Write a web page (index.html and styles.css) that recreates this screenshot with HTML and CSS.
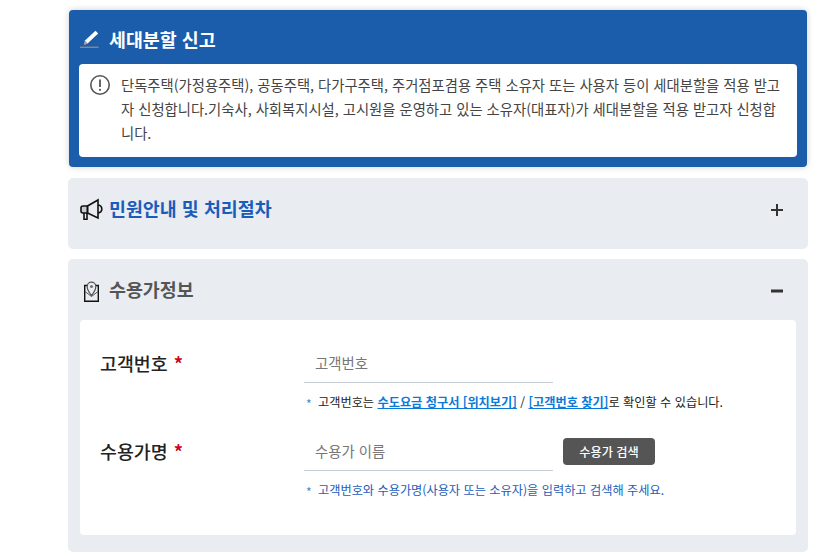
FILE: index.html
```html
<!DOCTYPE html>
<html lang="ko">
<head>
  <meta charset="UTF-8" />
  <meta name="viewport" content="width=device-width, initial-scale=1.0"/>
  <title>세대분할 신고</title>
  <link rel="stylesheet" href="styles.css">
</head>
<body>
  <div class="container">
    <section class="intro">
      <h2 class="intro-title">
        <svg class="icon" width="20" height="20" viewBox="0 0 20 20">
          <path d="M5 11.500L15.500 1.800l2.700 2.700L7.800 14.300l-3.300 1.200z" fill="#fff"/>
          <path d="M3.800 16l1.300-4.300 2.900 2.700z" fill="#a8a59c"/>
          <path d="M0 18.300h18.500" stroke="#8b8780" stroke-width="1.500"/>
        </svg>
        세대분할 신고
      </h2>
      <div class="notice">
        <svg class="notice-icon" width="22" height="22" viewBox="0 0 22 22">
          <circle cx="11" cy="11" r="9.200" fill="none" stroke="#555" stroke-width="1.600"/>
          <path d="M11 5.500v7.500" stroke="#555" stroke-width="1.800"/>
          <circle cx="11" cy="15.800" r="1.100" fill="#555"/>
        </svg>
        <p>단독주택(가정용주택), 공동주택, 다가구주택, 주거점포겸용 주택 소유자 또는 사용자 등이 세대분할을 적용 받고자 신청합니다.기숙사, 사회복지시설, 고시원을 운영하고 있는 소유자(대표자)가 세대분할을 적용 받고자 신청합니다.</p>
      </div>
    </section>

    <section class="panel panel-closed">
      <div class="panel-head">
        <h3 class="panel-title title-blue">
          <svg class="icon" width="24" height="24" viewBox="0 0 24 24" fill="none" stroke="#111" stroke-width="1.600">
            <path d="M7.500 10L18 4v18L7.500 17z"/>
            <path d="M7.500 10H3a2 2 0 0 0-2 2v3a2 2 0 0 0 2 2h4.500z" fill="#111" fill-opacity=".15"/>
            <path d="M4 17v6.200h3V17"/>
            <path d="M18 9c2.500.3 3.800 2 3.800 4s-1.300 3.700-3.800 4"/>
          </svg>
          민원안내 및 처리절차
        </h3>
        <svg class="toggle" width="12" height="12" viewBox="0 0 12 12"><path d="M0 6h12M6 0v12" stroke="#333" stroke-width="2"/></svg>
      </div>
    </section>

    <section class="panel">
      <div class="panel-head">
        <h3 class="panel-title">
          <svg class="icon" width="24" height="26" viewBox="0 0 24 26" fill="none" stroke="#111" stroke-width="1.400">
            <path d="M7.500 9.500H4.700v15.800h13.600V9.500h-2.800"/>
            <path d="M5 15.500l6.500 5 6.500-5" stroke="#555" stroke-width="1"/>
            <path d="M11.500 19.500c-2.500-3-4.300-6-4.300-9a4.300 4.300 0 0 1 8.600 0c0 3-1.800 6-4.300 9z" fill="#e9ecf1" stroke="#555" stroke-width="1.200"/>
            <circle cx="11.500" cy="10.500" r="1.600" fill="#777" stroke="none"/>
          </svg>
          수용가정보
        </h3>
        <svg class="toggle" width="12" height="12" viewBox="0 0 12 12"><path d="M0 6h12" stroke="#333" stroke-width="3"/></svg>
      </div>
      <div class="panel-body">
        <div class="field">
          <label class="field-label">고객번호 <b>*</b></label>
          <div class="field-main">
            <input class="input" type="text" placeholder="고객번호">
            <p class="hint">고객번호는 <a href="#">수도요금 청구서 [위치보기]</a> / <a href="#">[고객번호 찾기]</a>로 확인할 수 있습니다.</p>
          </div>
        </div>
        <div class="field">
          <label class="field-label">수용가명 <b>*</b></label>
          <div class="field-main">
            <div class="input-row">
              <input class="input" type="text" placeholder="수용가 이름">
              <button class="btn">수용가 검색</button>
            </div>
            <p class="hint hint-blue">고객번호와 수용가명(사용자 또는 소유자)을 입력하고 검색해 주세요.</p>
          </div>
        </div>
      </div>
    </section>
  </div>
</body>
</html>
```

FILE: styles.css
```css
* {
  box-sizing: border-box;
}
body {
  margin: 0;
  background: #fff;
  color: #222;
  font-family: "Noto Sans CJK KR", "Noto Sans", sans-serif;
}
h2, h3, p {
  margin: 0;
}
.container {
  width: 740px;
  margin-left: 68px;
  padding-top: 10px;
}
.icon {
  flex: none;
}
.intro {
  margin: 0 1px 11px;
  height: 157px;
  padding: 0 10px;
  background: #1b5cab;
  border-radius: 4px;
  box-shadow: 0 0 6px rgba(0, 0, 0, .2);
}
.intro-title {
  display: flex;
  align-items: center;
  gap: 9px;
  height: 54px;
  padding: 4px 0 0 1px;
  color: #fff;
  font-size: 18.400px;
  font-weight: 700;
}
.notice {
  display: flex;
  gap: 10px;
  height: 93px;
  padding: 9px 10px;
  background: #fff;
  border-radius: 4px;
  font-size: 14.330px;
  line-height: 24px;
  color: #444;
}
.notice-icon {
  flex: none;
  margin-top: 1px;
}
.panel {
  margin-bottom: 10px;
  padding: 0 12px;
  background: #e9ecf1;
  border-radius: 5px;
  height: 293px;
}
.panel-closed {
  height: 71px;
}
.panel-head {
  display: flex;
  justify-content: space-between;
  align-items: center;
  height: 61px;
  padding: 0 13px 0 0;
}
.panel-title {
  display: flex;
  align-items: center;
  gap: 5px;
  margin-top: -2px;
  font-size: 18.400px;
  font-weight: 700;
  color: #555;
}
.title-blue {
  color: #1b5cba;
}
.toggle {
  flex: none;
  margin-top: 2px;
}
.panel-body {
  height: 215px;
  padding: 20px;
  background: #fff;
  border-radius: 4px;
}
.field {
  display: flex;
  margin-bottom: 17px;
}
.field-label {
  width: 204px;
  flex: none;
  padding-top: 10px;
  font-size: 18.400px;
  font-weight: 500;
}
.field-label b {
  margin-left: 1px;
  color: #d0021b;
}
.field-main {
  flex: 1;
}
.input-row {
  display: flex;
  align-items: flex-start;
  gap: 10px;
}
.input {
  display: block;
  width: 249px;
  height: 43px;
  padding: 2px 11px 0;
  border: 0;
  border-bottom: 1px solid #c8ced6;
  font: 14.400px "Noto Sans CJK KR", sans-serif;
  outline: none;
}
.input::placeholder {
  color: #777;
}
.btn {
  width: 92px;
  height: 27px;
  margin-top: 10px;
  border: 0;
  border-radius: 4px;
  background: #555;
  color: #fff;
  font: 500 12.200px "Noto Sans CJK KR", sans-serif;
}
.hint {
  position: relative;
  margin-top: 10px;
  padding-left: 14px;
  font-size: 12.200px;
  line-height: 18px;
  color: #222;
}
.hint::before {
  content: "*";
  position: absolute;
  left: 2px;
  top: 2px;
  color: #4a7fc9;
}
.hint a {
  color: #0a7ad9;
  font-weight: 700;
}
.hint-blue {
  color: #1b5cba;
}
```
